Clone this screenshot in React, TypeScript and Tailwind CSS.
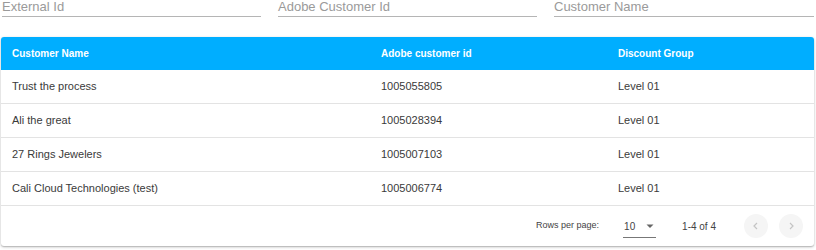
import React from "react";

const rows = [
  { name: "Trust the process", id: "1005055805", group: "Level 01" },
  { name: "Ali the great", id: "1005028394", group: "Level 01" },
  { name: "27 Rings Jewelers", id: "1005007103", group: "Level 01" },
  { name: "Cali Cloud Technologies (test)", id: "1005006774", group: "Level 01" },
];

function Field({ label }: { label: string }) {
  return (
    <div className="h-[17px] border-b border-[#b5b5b5]">
      <div className="text-[13px] leading-[13px] text-[#9a9a9a]">{label}</div>
    </div>
  );
}

export default function App() {
  return (
    <div className="w-[816px] h-[250px] bg-white overflow-hidden" style={{ fontFamily: '"Liberation Sans", Arial, sans-serif' }}>
      <div className="grid grid-cols-[259px_259px_260px] gap-x-[17px] pl-[2px]">
        <Field label="External Id" />
        <Field label="Adobe Customer Id" />
        <Field label="Customer Name" />
      </div>
      <div className="mt-[20px] ml-[1px] w-[813px] bg-white rounded-[3px] shadow-[0_1px_3px_rgba(0,0,0,0.25),0_1px_1px_rgba(0,0,0,0.12)] overflow-hidden">
        <div className="flex h-[33px] items-center bg-[#00aeff] text-white text-[10px] font-bold">
          <div className="w-[380px] pl-[11px]">Customer Name</div>
          <div className="w-[237px]">Adobe customer id</div>
          <div className="flex-1">Discount Group</div>
        </div>
        {rows.map((r) => (
          <div key={r.id} className="flex h-[34px] items-center border-b border-[#e3e3e3] text-[11px] text-[#3a3a3a]">
            <div className="w-[380px] pl-[11px]">{r.name}</div>
            <div className="w-[237px]">{r.id}</div>
            <div className="flex-1">{r.group}</div>
          </div>
        ))}
        <div className="flex h-[40px] items-center justify-end text-[9px] text-[#444] pr-[11px]">
          <span>Rows per page:</span>
          <div className="ml-[24px] flex items-center h-[24px] w-[33px] border-b border-[#777] pt-[1px]">
            <span className="text-[10px] pl-[1px]">10</span>
            <svg width="10" height="10" viewBox="0 0 10 10" className="ml-[10px]">
              <path d="M1.5 3.5 L8.5 3.5 L5 7 Z" fill="#666" />
            </svg>
          </div>
          <span className="ml-[26px] text-[10px]">1-4 of 4</span>
          <div className="ml-[28px] flex gap-[11px]">
            <div className="w-[24px] h-[24px] rounded-full bg-[#f5f5f5] flex items-center justify-center">
              <svg width="10" height="10" viewBox="0 0 10 10">
                <path d="M6 2 L3 5 L6 8" stroke="#c4c4c4" strokeWidth="1.2" fill="none" />
              </svg>
            </div>
            <div className="w-[24px] h-[24px] rounded-full bg-[#f5f5f5] flex items-center justify-center">
              <svg width="10" height="10" viewBox="0 0 10 10">
                <path d="M4 2 L7 5 L4 8" stroke="#c4c4c4" strokeWidth="1.2" fill="none" />
              </svg>
            </div>
          </div>
        </div>
      </div>
    </div>
  );
}
